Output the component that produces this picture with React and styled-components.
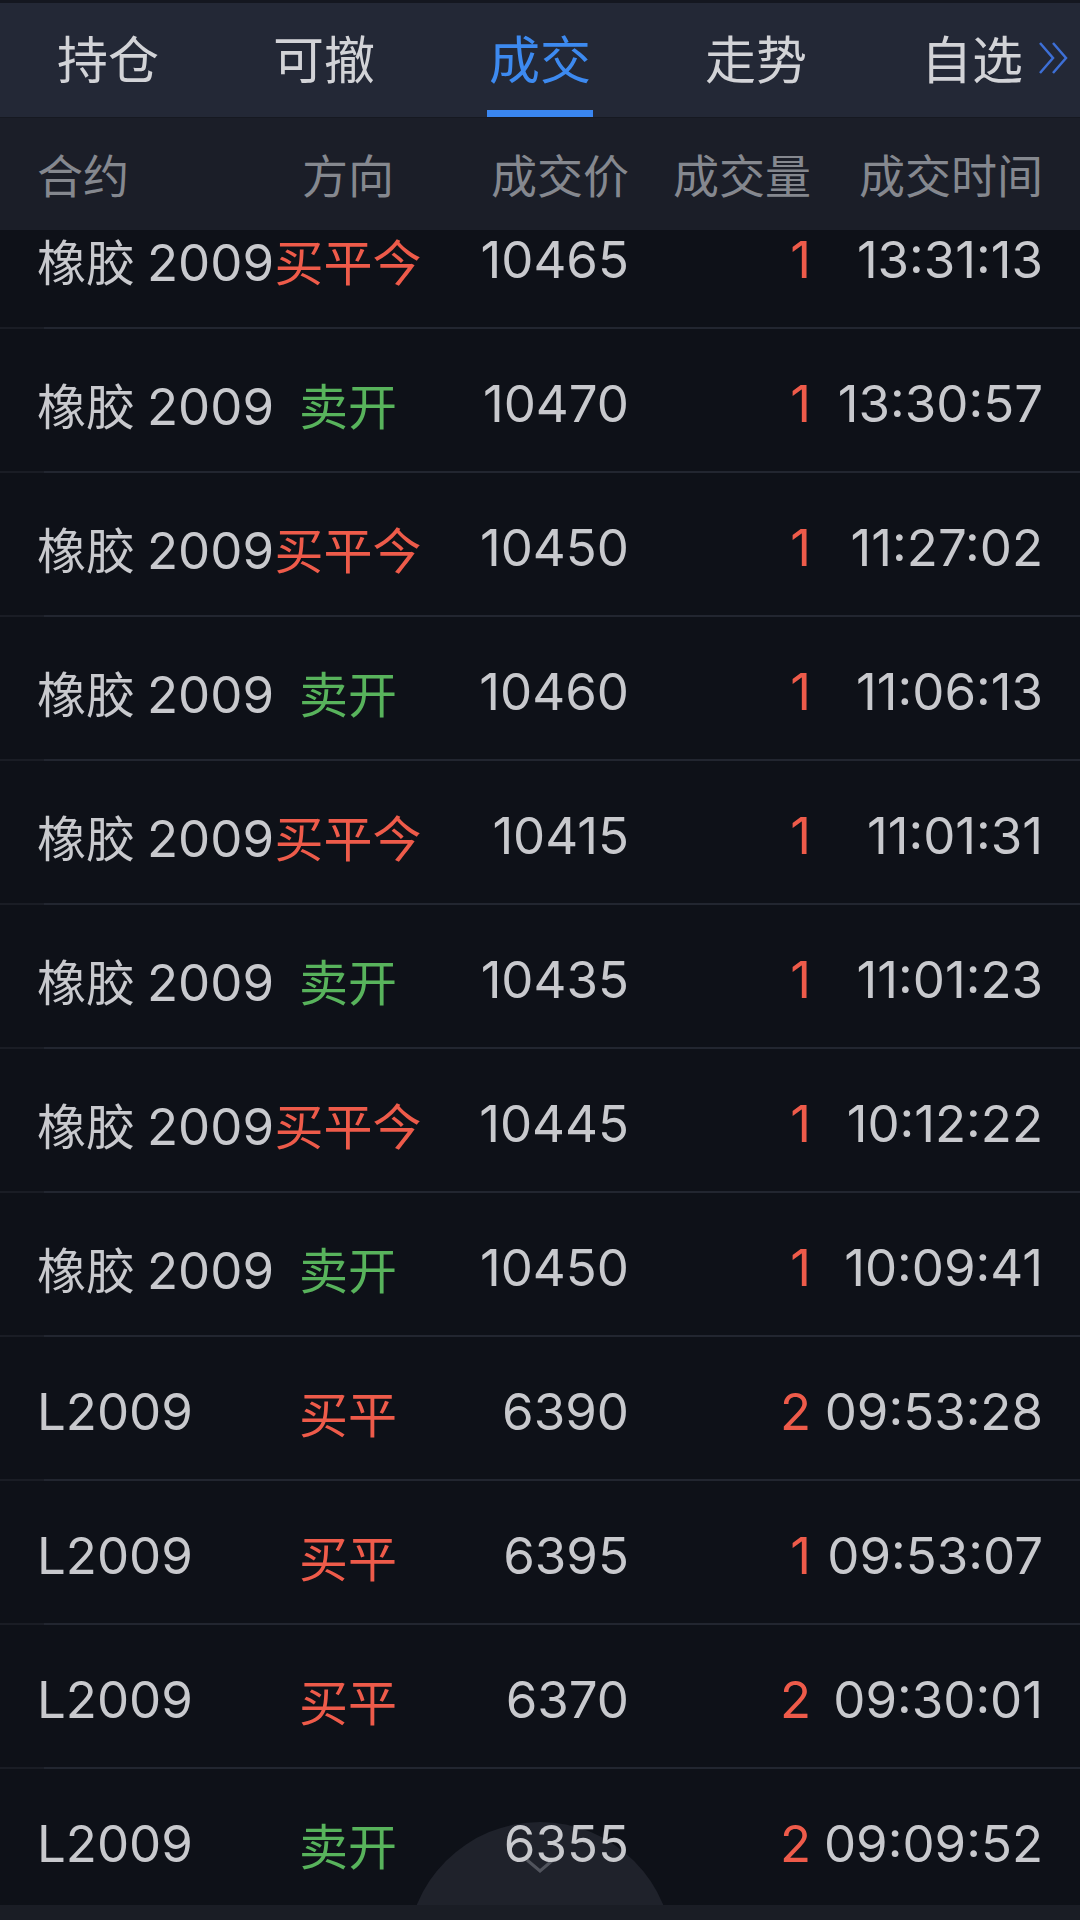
import React from 'react';
import styled, { createGlobalStyle } from 'styled-components';

const GlobalStyle = createGlobalStyle`
  html, body {
    margin: 0;
    padding: 0;
    background: #0e1118;
  }
  body {
    font-family: "Liberation Sans", "Noto Sans CJK SC", sans-serif;
  }
`;

const COLS = '237px 148px 207px 182px 232px';

const Page = styled.div`
  width: 1080px;
  height: 1920px;
  display: flex;
  flex-direction: column;
  background: #0e1118;
  overflow: hidden;
`;

const TabBar = styled.div`
  height: 114px;
  display: grid;
  grid-template-columns: repeat(5, 1fr);
  background: #232836;
  border-top: 3px solid #141720;
  flex-shrink: 0;
`;

const Tab = styled.div`
  position: relative;
  display: flex;
  align-items: center;
  justify-content: center;
  padding-bottom: 6px;
  font-size: 51px;
  color: ${p => (p.active ? '#3d8af0' : '#d2d3d7')};

  &::after {
    content: '';
    display: ${p => (p.active ? 'block' : 'none')};
    position: absolute;
    left: 50%;
    bottom: 0;
    width: 106px;
    height: 7px;
    margin-left: -53px;
    background: #3a86f0;
  }
`;

const TabLabel = styled.span`
  position: relative;
`;

const More = styled.svg`
  position: absolute;
  left: 100%;
  top: 50%;
  margin-left: 14px;
  margin-top: -17px;
`;

const Header = styled.div`
  height: 113px;
  display: grid;
  grid-template-columns: ${COLS};
  align-items: center;
  padding: 0 37px 3px;
  background: #1b1e28;
  border-top: 1px solid #161921;
  box-sizing: border-box;
  flex-shrink: 0;
  font-size: 46px;
  color: #85888f;
  position: relative;
  z-index: 2;
`;

const Cell = styled.div`
  white-space: nowrap;
  text-align: ${p => p.align || 'right'};
  color: ${p => p.color || 'inherit'};
  font-size: ${p => (p.cjk ? '49px' : 'inherit')};
`;

const List = styled.div`
  flex: 1;
  position: relative;
  overflow: hidden;
`;

const Rows = styled.div`
  position: relative;
  z-index: 1;
  margin-top: -45px;
`;

const Row = styled.div`
  position: relative;
  height: 144px;
  box-sizing: border-box;
  display: grid;
  grid-template-columns: ${COLS};
  align-items: center;
  padding: 5px 37px 0;
  font-family: Inter, "Noto Sans CJK SC", sans-serif;
  font-size: 51px;
  color: #c8c9cd;

  &::before {
    content: '';
    position: absolute;
    left: 0;
    right: 0;
    bottom: 0;
    height: 2px;
    background: #1a1d25;
  }
  &::after {
    content: '';
    position: absolute;
    left: 44px;
    right: 0;
    bottom: 0;
    height: 2px;
    background: #222630;
  }
`;

const Name = styled.span`
  font-size: 49px;
  margin-right: 12px;
`;

const Dome = styled.div`
  position: absolute;
  left: 50%;
  bottom: -183px;
  width: 266px;
  height: 266px;
  margin-left: -133px;
  border-radius: 50%;
  background: #1f222b;
  display: flex;
  justify-content: center;
  padding-top: 36px;
  box-sizing: border-box;
`;

const BottomStrip = styled.div`
  height: 15px;
  background: #1a1d25;
  flex-shrink: 0;
`;

const RED = '#ee5b4a';
const GREEN = '#58b35c';

const tabs = ['持仓', '可撤', '成交', '走势', '自选'];

const trades = [
  ['橡胶', '2009', '买平今', '10465', '1', '13:31:13'],
  ['橡胶', '2009', '卖开', '10470', '1', '13:30:57'],
  ['橡胶', '2009', '买平今', '10450', '1', '11:27:02'],
  ['橡胶', '2009', '卖开', '10460', '1', '11:06:13'],
  ['橡胶', '2009', '买平今', '10415', '1', '11:01:31'],
  ['橡胶', '2009', '卖开', '10435', '1', '11:01:23'],
  ['橡胶', '2009', '买平今', '10445', '1', '10:12:22'],
  ['橡胶', '2009', '卖开', '10450', '1', '10:09:41'],
  ['', 'L2009', '买平', '6390', '2', '09:53:28'],
  ['', 'L2009', '买平', '6395', '1', '09:53:07'],
  ['', 'L2009', '买平', '6370', '2', '09:30:01'],
  ['', 'L2009', '卖开', '6355', '2', '09:09:52'],
];

const App = () => (
  <Page>
    <GlobalStyle />
    <TabBar>
      {tabs.map((t, i) => (
        <Tab key={t} active={i === 2}>
          <TabLabel>
            {t}
            {i === 4 && (
              <More width="34" height="36" viewBox="0 0 34 36">
                <polyline points="3,3 16,18 3,33" fill="none" stroke="#3d6fd6" strokeWidth="2.5" />
                <polyline points="16,3 29,18 16,33" fill="none" stroke="#3d6fd6" strokeWidth="2.5" />
              </More>
            )}
          </TabLabel>
        </Tab>
      ))}
    </TabBar>
    <Header>
      <Cell align="left">合约</Cell>
      <Cell align="center">方向</Cell>
      <Cell>成交价</Cell>
      <Cell>成交量</Cell>
      <Cell>成交时间</Cell>
    </Header>
    <List>
      <Rows>
        {trades.map(([name, code, dir, price, qty, time], i) => (
          <Row key={i}>
            <Cell align="left">
              {name && <Name>{name}</Name>}
              {code}
            </Cell>
            <Cell align="center" cjk color={dir.startsWith('买') ? RED : GREEN}>{dir}</Cell>
            <Cell>{price}</Cell>
            <Cell color={RED}>{qty}</Cell>
            <Cell>{time}</Cell>
          </Row>
        ))}
      </Rows>
      <Dome>
        <svg width="30" height="16" viewBox="0 0 30 16">
          <polyline points="2,2 15,13 28,2" fill="none" stroke="rgba(200,202,210,0.3)" strokeWidth="3" />
        </svg>
      </Dome>
    </List>
    <BottomStrip />
  </Page>
);

export default App;
